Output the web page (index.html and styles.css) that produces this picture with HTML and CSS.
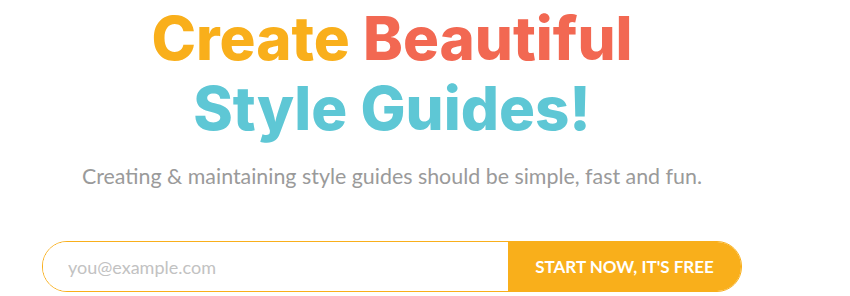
FILE: index.html
```html
<!DOCTYPE html>
<html lang="en">
<head>
  <meta charset="UTF-8" />
  <meta name="viewport" content="width=device-width, initial-scale=1.0"/>
  <title>Style Guides</title>
  <link rel="stylesheet" href="styles.css">
</head>
<body>
  <main class="hero">
    <h1 class="hero-title">
      <span class="orange">Create</span> <span class="coral">Beautiful</span><br>
      <span class="teal">Style Guides!</span>
    </h1>
    <p class="hero-sub">Creating &amp; maintaining style guides should be simple, fast and fun.</p>
    <form class="signup" onsubmit="return false">
      <input type="email" placeholder="you@example.com">
      <button type="submit">START NOW, IT'S FREE</button>
    </form>
  </main>
</body>
</html>
```

FILE: styles.css
```css
:root {
  --orange: #f9af1b;
  --coral: #f26852;
  --teal: #5ec7d5;
  --grey: #9a9a9a;
}

* {
  margin: 0;
  padding: 0;
  box-sizing: border-box;
}

body {
  background: #ffffff;
  font-family: 'Lato', sans-serif;
}

.hero {
  width: 700px;
  margin-left: 42px;
  text-align: center;
}

.hero-title {
  font-family: 'Inter', sans-serif;
  font-weight: 800;
  font-size: 60px;
  line-height: 70px;
  padding-top: 3px;
}

.orange { color: var(--orange); }
.coral { color: var(--coral); }
.teal { color: var(--teal); }

.hero-sub {
  margin-top: 20px;
  font-size: 21.4px;
  line-height: 26px;
  color: var(--grey);
}

.signup {
  display: flex;
  margin-top: 52px;
  height: 51px;
  border: 1px solid var(--orange);
  border-radius: 25px;
  overflow: hidden;
}

.signup input {
  flex: 1;
  border: none;
  outline: none;
  padding-left: 25px;
  font-family: 'Lato', sans-serif;
  font-size: 18px;
  color: #555;
}

.signup input::placeholder {
  color: #c2c2c2;
}

.signup button {
  width: 233px;
  border: none;
  background: var(--orange);
  color: #ffffff;
  font-family: 'Lato', sans-serif;
  font-weight: 700;
  font-size: 17px;
  cursor: pointer;
}
```
